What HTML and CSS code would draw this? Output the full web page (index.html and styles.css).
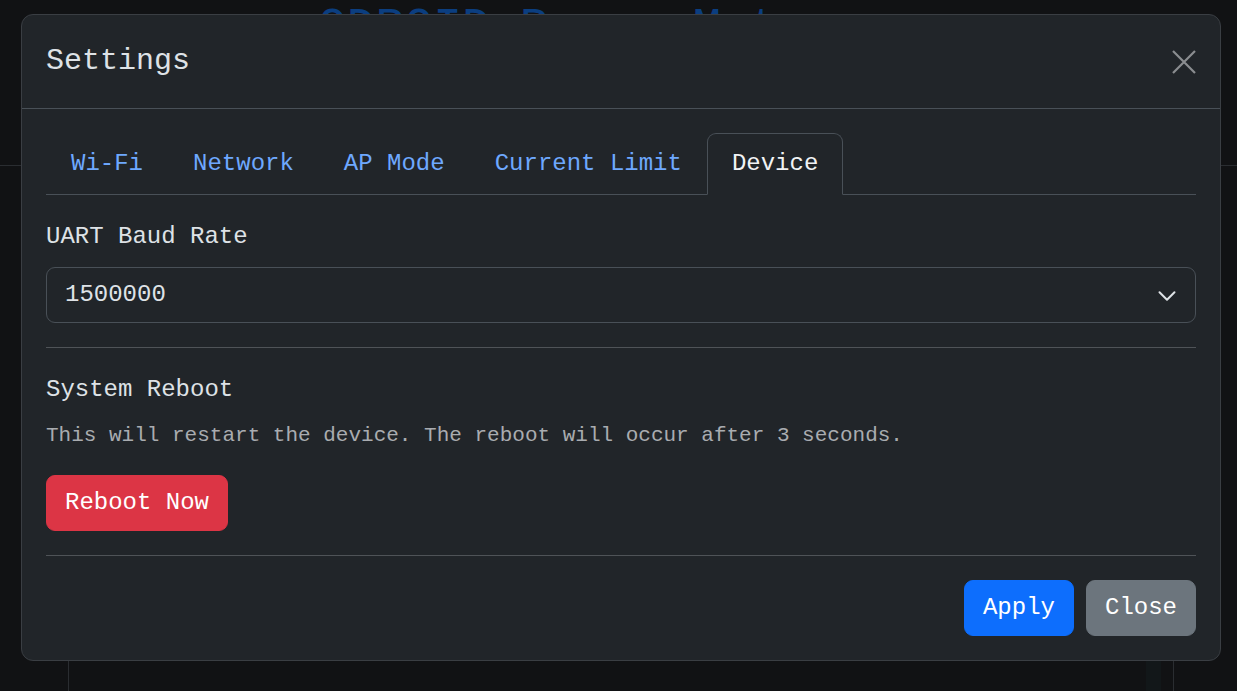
FILE: index.html
```html
<!DOCTYPE html>
<html lang="en">
<head>
<meta charset="utf-8">
<title>Settings</title>
<link rel="stylesheet" href="styles.css">
</head>
<body>
<div class="page">
  <header class="page-header">
    <h1 class="page-title">ODROID Power Mate</h1>
  </header>
  <main class="page-main">
    <div class="page-card">
      <div class="page-card-inner"></div>
      <div class="page-scroll"></div>
    </div>
  </main>
</div>

<div class="overlay">
  <div class="modal">
    <div class="modal-header">
      <h5 class="modal-title">Settings</h5>
      <button class="btn-close" type="button" aria-label="Close">
        <svg width="24" height="24" viewBox="0 0 24 24" aria-hidden="true">
          <path d="M1 1L23 23M23 1L1 23" stroke="currentColor" stroke-width="2.2" fill="none"/>
        </svg>
      </button>
    </div>
    <div class="modal-body">
      <ul class="nav-tabs">
        <li><a class="nav-link">Wi-Fi</a></li>
        <li><a class="nav-link">Network</a></li>
        <li><a class="nav-link">AP Mode</a></li>
        <li><a class="nav-link">Current Limit</a></li>
        <li><a class="nav-link active">Device</a></li>
      </ul>
      <div class="tab-pane">
        <label class="form-label">UART Baud Rate</label>
        <div class="form-select">
          <span>1500000</span>
          <svg class="chevron" width="20" height="20" viewBox="0 0 16 16" aria-hidden="true">
            <path d="M2 5l6 6 6-6" fill="none" stroke="currentColor" stroke-width="1.6" stroke-linecap="round" stroke-linejoin="round"/>
          </svg>
        </div>
        <hr class="divider">
        <h6 class="section-title">System Reboot</h6>
        <p class="section-text">This will restart the device. The reboot will occur after 3 seconds.</p>
        <button class="btn btn-danger" type="button">Reboot Now</button>
        <hr class="divider">
        <div class="footer-actions">
          <button class="btn btn-primary" type="button">Apply</button>
          <button class="btn btn-secondary" type="button">Close</button>
        </div>
      </div>
    </div>
  </div>
</div>
</body>
</html>
```
FILE: styles.css
```css
* { box-sizing: border-box; }

html, body {
  margin: 0;
  padding: 0;
  height: 100%;
}

body {
  background: #111214;
  font-family: "Liberation Mono", "DejaVu Sans Mono", monospace;
  color: #dee2e6;
  overflow: hidden;
}

.page {
  height: 100%;
  display: flex;
  flex-direction: column;
}

.page-header {
  height: 166px;
  border-bottom: 1px solid #2a2d31;
  padding-left: 318px;
}

.page-title {
  margin: 0;
  padding-top: 4px;
  font-size: 48px;
  line-height: 1;
  font-weight: 400;
  color: #0b3e80;
}

.page-main {
  flex: 1;
  display: flex;
  padding-left: 68px;
  padding-right: 63px;
  padding-top: 24px;
}

.page-card {
  flex: 1;
  display: flex;
  border-left: 1px solid #2a2d31;
  border-right: 1px solid #2a2d31;
}

.page-card-inner {
  flex: 1;
}

.page-scroll {
  width: 15px;
  margin-right: 12px;
  background: #121719;
}

.overlay {
  position: fixed;
  inset: 0;
  padding: 14px 16px 0 21px;
}

.modal {
  width: 1200px;
  background: #212529;
  border: 1px solid #3a3e43;
  border-radius: 12px;
}

.modal-header {
  display: flex;
  align-items: center;
  justify-content: space-between;
  padding: 24px;
  border-bottom: 1px solid #495057;
}

.modal-title {
  margin: 0;
  font-size: 30px;
  line-height: 45px;
  font-weight: 400;
  color: #dee2e6;
}

.btn-close {
  display: flex;
  align-items: center;
  justify-content: center;
  width: 36px;
  height: 36px;
  margin-right: -6px;
  padding: 0;
  border: 0;
  background: transparent;
  color: #8b8d90;
}

.modal-body {
  padding: 24px;
}

.nav-tabs {
  list-style: none;
  margin: 0;
  padding: 0;
  display: flex;
  border-bottom: 1px solid #495057;
}

.nav-link {
  display: block;
  padding: 12px 24px;
  margin-bottom: -1px;
  font-size: 24px;
  line-height: 36px;
  color: #6ea8fe;
  border: 1px solid transparent;
  border-radius: 9px 9px 0 0;
}

.nav-link.active {
  color: #f1f3f5;
  background: #212529;
  border-color: #495057 #495057 #212529;
}

.tab-pane {
  padding-top: 24px;
}

.form-label {
  display: block;
  margin-bottom: 12px;
  font-size: 24px;
  line-height: 36px;
  color: #dee2e6;
}

.form-select {
  display: flex;
  align-items: center;
  justify-content: space-between;
  height: 56px;
  padding: 9px 18px 9px 18px;
  border: 1px solid #495057;
  border-radius: 9px;
  font-size: 24px;
  line-height: 36px;
  color: #dee2e6;
}

.chevron {
  color: #dee2e6;
  margin-top: 2px;
}

.divider {
  margin: 24px 0;
  border: 0;
  border-top: 1px solid #4f5357;
}

.section-title {
  margin: 0 0 12px;
  font-size: 24px;
  line-height: 36px;
  font-weight: 400;
  color: #dee2e6;
}

.section-text {
  margin: 0 0 24px;
  font-size: 21px;
  line-height: 31px;
  color: #a9acb0;
}

.btn {
  display: inline-block;
  padding: 9px 18px;
  border: 1px solid transparent;
  border-radius: 9px;
  font-family: inherit;
  font-size: 24px;
  line-height: 36px;
  color: #ffffff;
  cursor: pointer;
}

.btn-danger {
  background: #dc3545;
  border-color: #dc3545;
}

.btn-primary {
  background: #0d6efd;
  border-color: #0d6efd;
}

.btn-secondary {
  background: #6c757d;
  border-color: #6c757d;
}

.footer-actions {
  display: flex;
  justify-content: flex-end;
  gap: 12px;
}
```
